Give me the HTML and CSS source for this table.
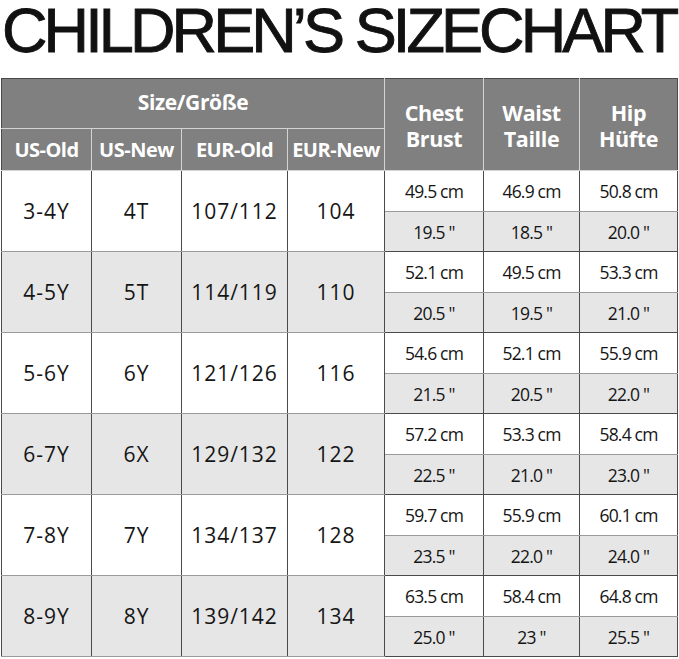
FILE: index.html
```html
<!DOCTYPE html>
<html>
<head>
<meta charset="utf-8">
<link rel="stylesheet" href="styles.css">
</head>
<body>
<div class="head"><h1 class="title">CHILDREN’S SIZECHART</h1></div>
<table class="chart">
  <colgroup>
    <col class="c1"><col class="c2"><col class="c3"><col class="c4"><col class="c5"><col class="c6"><col class="c7">
  </colgroup>
  <thead>
    <tr class="h1">
      <th colspan="4">Size/Größe</th>
      <th rowspan="2" class="two">Chest<br>Brust</th>
      <th rowspan="2" class="two">Waist<br>Taille</th>
      <th rowspan="2" class="two">Hip<br>Hüfte</th>
    </tr>
    <tr class="h2">
      <th>US-Old</th><th>US-New</th><th>EUR-Old</th><th>EUR-New</th>
    </tr>
  </thead>
  <tbody>
    <tr class="cm"><td rowspan="2" class="sz">3-4Y</td><td rowspan="2" class="sz">4T</td><td rowspan="2" class="sz">107/112</td><td rowspan="2" class="sz">104</td><td>49.5 cm</td><td>46.9 cm</td><td>50.8 cm</td></tr>
    <tr class="in"><td>19.5 "</td><td>18.5 "</td><td>20.0 "</td></tr>
    <tr class="cm alt"><td rowspan="2" class="sz">4-5Y</td><td rowspan="2" class="sz">5T</td><td rowspan="2" class="sz">114/119</td><td rowspan="2" class="sz">110</td><td>52.1 cm</td><td>49.5 cm</td><td>53.3 cm</td></tr>
    <tr class="in"><td>20.5 "</td><td>19.5 "</td><td>21.0 "</td></tr>
    <tr class="cm"><td rowspan="2" class="sz">5-6Y</td><td rowspan="2" class="sz">6Y</td><td rowspan="2" class="sz">121/126</td><td rowspan="2" class="sz">116</td><td>54.6 cm</td><td>52.1 cm</td><td>55.9 cm</td></tr>
    <tr class="in"><td>21.5 "</td><td>20.5 "</td><td>22.0 "</td></tr>
    <tr class="cm alt"><td rowspan="2" class="sz">6-7Y</td><td rowspan="2" class="sz">6X</td><td rowspan="2" class="sz">129/132</td><td rowspan="2" class="sz">122</td><td>57.2 cm</td><td>53.3 cm</td><td>58.4 cm</td></tr>
    <tr class="in"><td>22.5 "</td><td>21.0 "</td><td>23.0 "</td></tr>
    <tr class="cm"><td rowspan="2" class="sz">7-8Y</td><td rowspan="2" class="sz">7Y</td><td rowspan="2" class="sz">134/137</td><td rowspan="2" class="sz">128</td><td>59.7 cm</td><td>55.9 cm</td><td>60.1 cm</td></tr>
    <tr class="in"><td>23.5 "</td><td>22.0 "</td><td>24.0 "</td></tr>
    <tr class="cm alt"><td rowspan="2" class="sz">8-9Y</td><td rowspan="2" class="sz">8Y</td><td rowspan="2" class="sz">139/142</td><td rowspan="2" class="sz">134</td><td>63.5 cm</td><td>58.4 cm</td><td>64.8 cm</td></tr>
    <tr class="in"><td>25.0 "</td><td>23 "</td><td>25.5 "</td></tr>
  </tbody>
</table>
</body>
</html>
```
FILE: styles.css
```css
html, body {
  margin: 0;
  padding: 0;
  background: #ffffff;
}
.head {
  height: 78px;
}
.title {
  margin: 0;
  padding: 0 0 0 2px;
  font-family: "Liberation Sans", Arial, sans-serif;
  font-weight: normal;
  font-size: 63px;
  line-height: 60px;
  letter-spacing: -3.9px;
  color: #111111;
  -webkit-text-stroke: 0.9px #111111;
  white-space: nowrap;
}
.chart {
  margin-left: 1px;
  border-collapse: collapse;
  table-layout: fixed;
  width: 677px;
  font-family: "Open Sans", "Noto Sans", sans-serif;
  color: #151515;
}
.c1 { width: 90px; }
.c2 { width: 90px; }
.c3 { width: 106px; }
.c4 { width: 97px; }
.c5 { width: 99px; }
.c6 { width: 96px; }
.c7 { width: 98px; }
.chart th {
  background: #808080;
  color: #ffffff;
  font-weight: bold;
  font-size: 21px;
  letter-spacing: -0.4px;
  border: 1px solid #d4d4d4;
  padding: 0;
  text-align: center;
}
.chart thead tr:first-child th {
  border-top: 1px solid #4a4a4a;
}
.chart th:first-child { border-left: 1px solid #4a4a4a; }
.chart th:last-child { border-right: 1px solid #4a4a4a; }
.h1 { height: 50px; }
.h1 th { padding-bottom: 4px; }
.h2 { height: 42px; }
.h2 th { font-size: 20px; letter-spacing: -0.5px; }
.chart th.two {
  line-height: 26px;
  font-size: 21.5px;
  padding: 2px 0 0;
}
.chart td {
  border: 1px solid #4a4a4a;
  padding: 0;
  text-align: center;
  background: #ffffff;
}
.chart td.sz {
  font-size: 21px;
  letter-spacing: 1px;
}
.cm { height: 41px; }
.in { height: 40px; }
.cm td {
  font-size: 17.5px;
  letter-spacing: -0.8px;
  border-bottom: 1px solid #9a9a9a;
}
.in td {
  font-size: 17.5px;
  letter-spacing: -0.8px;
  background: #e6e6e6;
  border-top: 1px solid #9a9a9a;
}
.alt td.sz { background: #e6e6e6; }
```
